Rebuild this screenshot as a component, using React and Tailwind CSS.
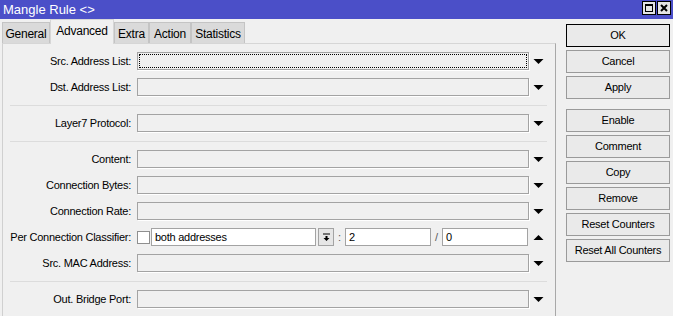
const font = { fontFamily: '"Liberation Sans", Arial, sans-serif' };

const Arrow = ({ up }) => (
  <svg width="11" height="7" viewBox="0 0 11 7">
    <path d={up ? "M0.5 6H10.5L5.5 1Z" : "M0.5 1H10.5L5.5 6Z"} fill="#000" />
  </svg>
);

const Field = ({ focus }) => (
  <div
    className={
      "w-[392px] h-[18px] border border-[#a3a3a3] bg-[#f0f0f0] shadow-[1px_1px_0_#ffffff] " +
      (focus ? "outline-1 outline-dotted outline-black -outline-offset-3" : "")
    }
  />
);

const Label = ({ children }) => (
  <div className="w-[128px] text-right whitespace-nowrap">{children}</div>
);

const Row = ({ label, focus }) => (
  <div className="flex items-center h-[18px]">
    <Label>{label}</Label>
    <div className="ml-[6px]">
      <Field focus={focus} />
    </div>
    <div className="ml-[4px] w-[11px] flex items-center justify-center">
      <Arrow />
    </div>
  </div>
);

const Sep = () => <div className="ml-[7px] w-[537px] h-px bg-[#dcdcdc] mt-[9px] mb-[8px]" />;

const Tab = ({ children, active, w }) =>
  active ? (
    <div
      className={`${w} h-[25px] -mb-px border border-b-0 border-[#d6d6d6] bg-[#f0f0f0] flex justify-center pt-[2px] relative z-10`}
    >
      {children}
    </div>
  ) : (
    <div
      className={`${w} h-[21px] border border-b-0 border-[#c4c4c4] bg-[#dadada] flex justify-center items-center pt-[1px]`}
    >
      {children}
    </div>
  );

const Btn = ({ children, main }) => (
  <div
    className={
      "w-[104px] h-[23px] flex items-center justify-center bg-[#eaeaea] border " +
      (main ? "border-black" : "border-[#9a9a9a]")
    }
  >
    {children}
  </div>
);

export default function App() {
  return (
    <div
      className="w-[673px] h-[316px] bg-[#f0f0f0] overflow-hidden flex flex-col text-[11px] tracking-[-0.25px] text-black"
      style={font}
    >
      {/* title bar */}
      <div className="h-[19px] bg-[#4b4fc8] flex items-center pl-[3px] pr-[2px]">
        <span className="text-white text-[13px] tracking-normal">Mangle Rule &lt;&gt;</span>
        <div className="ml-auto flex gap-[1px] self-start mt-[1px]">
          <div className="w-[14px] h-[14px] bg-[#e4e4e4] border border-black flex items-center justify-center">
            <div className="w-[8px] h-[8px] border border-black border-t-2" />
          </div>
          <div className="w-[14px] h-[14px] bg-[#e4e4e4] border border-black flex items-center justify-center">
            <svg width="8" height="8" viewBox="0 0 8 8">
              <path d="M1 1L7 7M7 1L1 7" stroke="#000" strokeWidth="2" />
            </svg>
          </div>
        </div>
      </div>

      <div className="flex flex-1">
        {/* left side */}
        <div className="w-[556px] pl-[2px] flex flex-col">
          <div className="h-[24px] flex items-end text-[12px]">
            <Tab w="w-[48px]">General</Tab>
            <Tab w="w-[64px]" active>
              Advanced
            </Tab>
            <Tab w="w-[35px]">Extra</Tab>
            <Tab w="w-[42px]">Action</Tab>
            <Tab w="w-[54px]">Statistics</Tab>
          </div>
          <div className="flex-1 border-t border-l border-r border-t-[#d6d6d6] border-l-[#d0d0d0] border-r-[#a8a8a8] pt-[8px]">
            <div className="flex flex-col gap-[8px]">
              <Row label="Src. Address List:" focus />
              <Row label="Dst. Address List:" />
            </div>
            <Sep />
            <Row label="Layer7 Protocol:" />
            <Sep />
            <div className="flex flex-col gap-[8px]">
              <Row label="Content:" />
              <Row label="Connection Bytes:" />
              <Row label="Connection Rate:" />
              <div className="flex items-center h-[18px]">
                <Label>Per Connection Classifier:</Label>
                <div className="ml-[6px] flex items-center">
                  <div className="w-[13px] h-[13px] bg-white border border-[#8f8f8f]" />
                  <div className="ml-[1px] w-[165px] h-[18px] bg-white border border-[#a3a3a3] flex items-center pl-[3px]">
                    both addresses
                  </div>
                  <div className="ml-[2px] w-[16px] h-[18px] bg-[#e6e6e6] border border-[#a3a3a3] flex items-center justify-center">
                    <svg width="9" height="9" viewBox="0 0 9 9">
                      <path d="M1 0.5H8V1.5H1Z" fill="#000" />
                      <path d="M3.5 3H5.5V5H7.5L4.5 8L1.5 5H3.5Z" fill="#000" />
                    </svg>
                  </div>
                  <div className="w-[11px] text-center text-[#5a5a5a]">:</div>
                  <div className="w-[86px] h-[18px] bg-white border border-[#a3a3a3] flex items-center pl-[3px]">
                    2
                  </div>
                  <div className="w-[11px] text-center text-[#5a5a5a]">/</div>
                  <div className="w-[86px] h-[18px] bg-white border border-[#a3a3a3] flex items-center pl-[3px]">
                    0
                  </div>
                </div>
                <div className="ml-[5px] w-[11px] flex items-center justify-center">
                  <Arrow up />
                </div>
              </div>
              <Row label="Src. MAC Address:" />
            </div>
            <Sep />
            <Row label="Out. Bridge Port:" />
          </div>
        </div>

        {/* right side buttons */}
        <div className="pl-[10px] pt-[5px] flex flex-col">
          <div className="flex flex-col gap-[3px]">
            <Btn main>OK</Btn>
            <Btn>Cancel</Btn>
            <Btn>Apply</Btn>
          </div>
          <div className="mt-[10px] flex flex-col gap-[3px]">
            <Btn>Enable</Btn>
            <Btn>Comment</Btn>
            <Btn>Copy</Btn>
            <Btn>Remove</Btn>
            <Btn>Reset Counters</Btn>
            <Btn>Reset All Counters</Btn>
          </div>
        </div>
      </div>
    </div>
  );
}
